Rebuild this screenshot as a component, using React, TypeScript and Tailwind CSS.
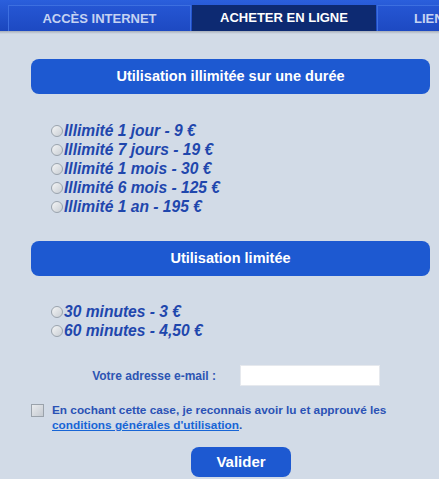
import React from "react";

function Radio() {
  return (
    <span className="inline-block w-[12px] h-[12px] rounded-full border border-[#9aa3ad] bg-gradient-to-br from-[#f4f5f6] to-[#c9ced4] mr-[1px] shrink-0" />
  );
}

function Option({ label }: { label: string }) {
  return (
    <div className="flex items-center h-[19px]">
      <Radio />
      <span className="text-[15.6px] font-bold italic text-[#1f47ad] leading-none">{label}</span>
    </div>
  );
}

function Header({ title }: { title: string }) {
  return (
    <div className="ml-[31px] w-[399px] h-[35px] rounded-[8px] bg-[#1d59d1] flex items-center justify-center text-white font-bold text-[14.5px]">
      {title}
    </div>
  );
}

export default function App() {
  return (
    <div
      className="w-[439px] h-[479px] overflow-hidden bg-[#d2dbe7]"
      style={{ fontFamily: '"Liberation Sans", Arial, sans-serif' }}
    >
      {/* nav */}
      <div className="h-[31px] bg-gradient-to-b from-[#2b5fdc] to-[#1a46bd] flex items-end pl-[8px] overflow-hidden">
        <div className="w-[183px] h-[26px] border border-b-0 border-[#3d6fe0] bg-gradient-to-b from-[#2556d3] to-[#1d49c2] flex items-center justify-center text-[13px] font-bold text-[#c5d3f2] shrink-0">
          ACCÈS INTERNET
        </div>
        <div className="w-[1px] shrink-0" />
        <div className="w-[184px] h-[26px] bg-[#0d2a72] flex items-center justify-center text-[13px] font-bold text-white shrink-0">
          ACHETER EN LIGNE
        </div>
        <div className="w-[1px] shrink-0" />
        <div className="w-[184px] h-[26px] border border-b-0 border-[#3d6fe0] bg-gradient-to-b from-[#2556d3] to-[#1d49c2] flex items-center pl-[36px] text-[13px] font-bold text-[#c5d3f2] shrink-0 whitespace-nowrap">
          LIENS
        </div>
      </div>
      <div className="h-[3px] bg-gradient-to-b from-[#a7aeb9] to-[#d2dbe7]" />

      <div className="pt-[25px]">
        <Header title="Utilisation illimitée sur une durée" />
        <div className="pl-[51px] pt-[27px] flex flex-col">
          <Option label="Illimité 1 jour - 9 €" />
          <Option label="Illimité 7 jours - 19 €" />
          <Option label="Illimité 1 mois - 30 €" />
          <Option label="Illimité 6 mois - 125 €" />
          <Option label="Illimité 1 an - 195 €" />
        </div>

        <div className="pt-[25px]">
          <Header title="Utilisation limitée" />
        </div>
        <div className="pl-[51px] pt-[26px] flex flex-col">
          <Option label="30 minutes - 3 €" />
          <Option label="60 minutes - 4,50 €" />
        </div>

        <div className="flex items-center pt-[25px]">
          <div className="w-[216px] text-right text-[12px] font-bold text-[#2d55b3]">
            Votre adresse e-mail :
          </div>
          <input
            type="text"
            className="ml-[24px] w-[140px] h-[21px] bg-white border border-[#e6e9ee] outline-none"
          />
        </div>

        <div className="flex items-start pl-[31px] pt-[17px]">
          <span className="mt-[1px] w-[13px] h-[13px] border border-[#9aa2ab] bg-gradient-to-br from-[#e9ebee] to-[#c5cad1] shrink-0" />
          <div className="ml-[8px] text-[11.8px] font-bold leading-[15px] text-[#2a52b5]">
            En cochant cette case, je reconnais avoir lu et approuvé les
            <br />
            <span className="text-[#1765d6] underline">conditions générales d'utilisation</span>.
          </div>
        </div>

        <div className="flex justify-start pl-[191px] pt-[14px]">
          <button className="w-[100px] h-[30px] rounded-[8px] bg-[#1d59d1] text-white font-bold text-[15px]">
            Valider
          </button>
        </div>
      </div>
    </div>
  );
}
